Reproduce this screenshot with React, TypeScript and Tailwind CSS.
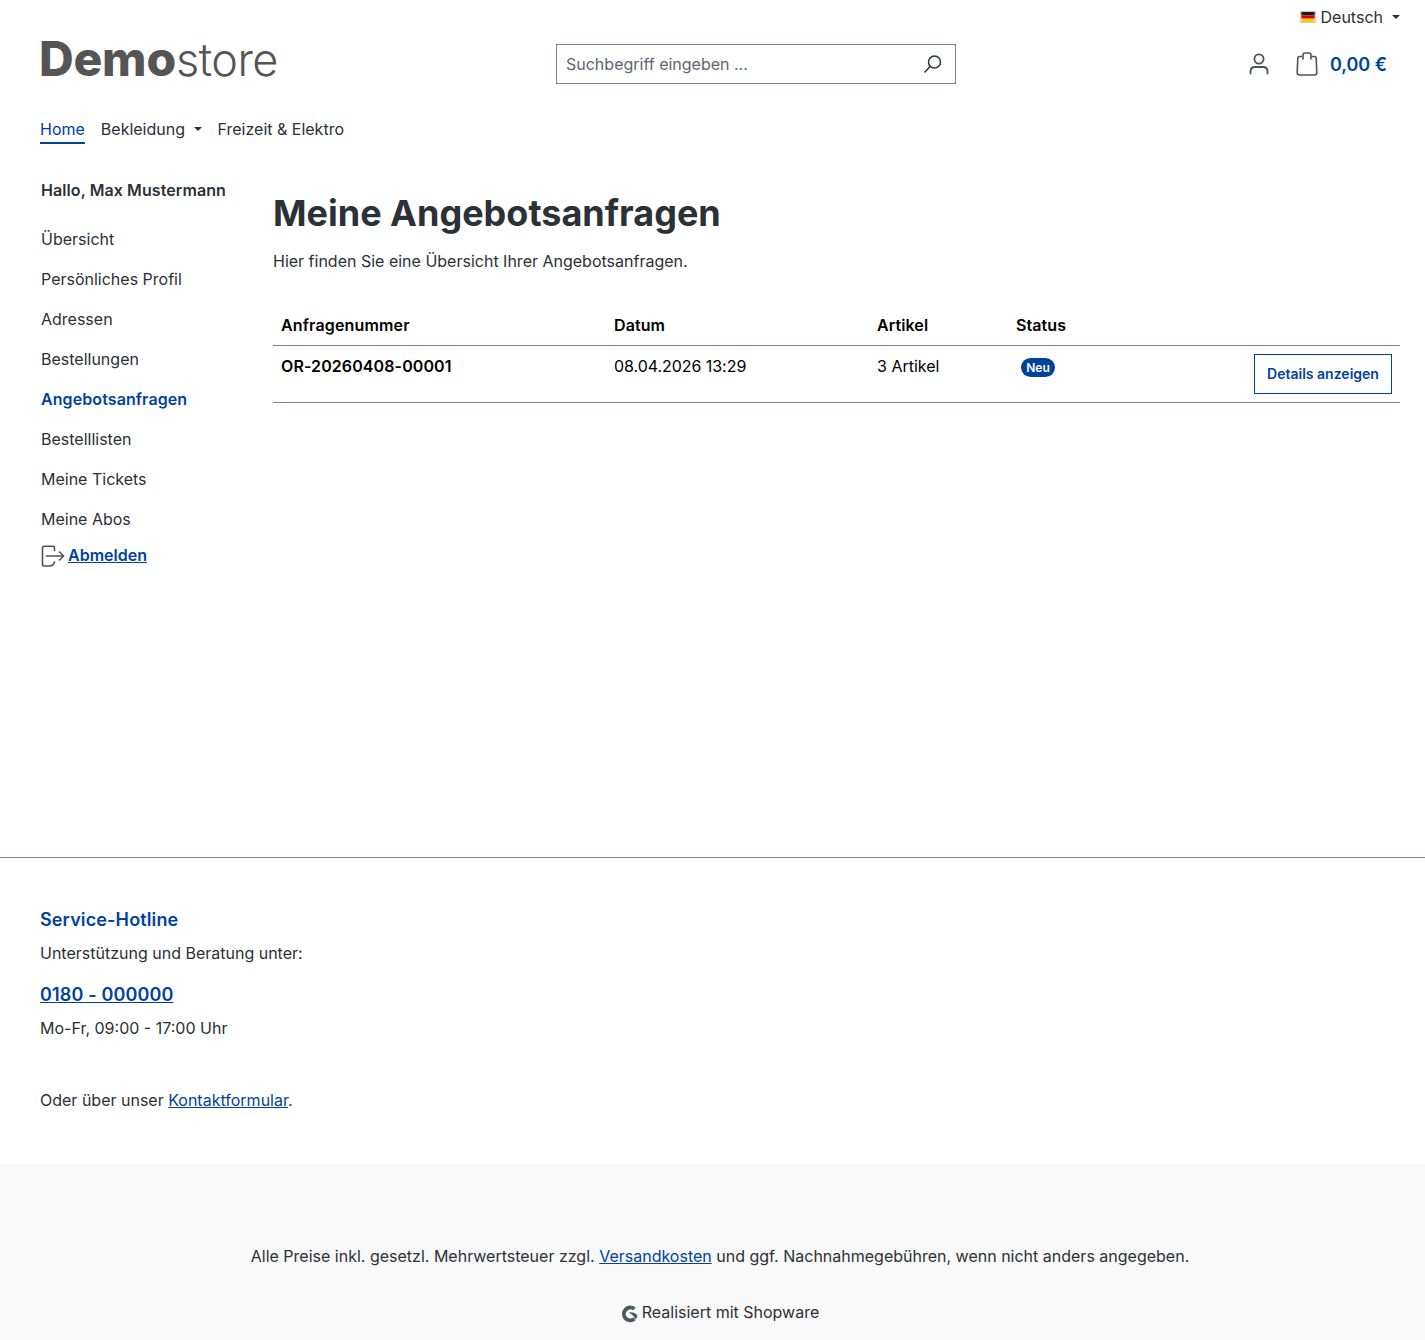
const sidebarLinks = [
  'Übersicht',
  'Persönliches Profil',
  'Adressen',
  'Bestellungen',
  'Angebotsanfragen',
  'Bestelllisten',
  'Meine Tickets',
  'Meine Abos',
];

function Caret() {
  return <span className="inline-block h-0 w-0 border-x-[4.8px] border-t-[4.8px] border-x-transparent border-t-[#2b3136]" />;
}

function GermanFlag() {
  return (
    <svg width="16" height="12" viewBox="0 0 16 12" className="border border-[#c8ccd0]">
      <rect width="16" height="4" fill="#1a1a1a" />
      <rect y="4" width="16" height="4" fill="#d80000" />
      <rect y="8" width="16" height="4" fill="#ffce00" />
    </svg>
  );
}

function SearchIcon() {
  return (
    <svg width="20" height="20" viewBox="0 0 20 20" fill="none" stroke="#2b3136" strokeWidth="1.5" strokeLinecap="round">
      <circle cx="11.5" cy="8" r="6" />
      <path d="M7.2 12.3 L2 18" />
    </svg>
  );
}

function UserIcon() {
  return (
    <svg width="20" height="22" viewBox="0 0 20 22" fill="none" stroke="#4a545b" strokeWidth="1.8" strokeLinecap="round">
      <circle cx="10" cy="6" r="4.6" />
      <path d="M1.5 20.5 V18.5 C1.5 15.6 3.6 14 6 14 H14 C16.4 14 18.5 15.6 18.5 18.5 V20.5" />
    </svg>
  );
}

function BagIcon() {
  return (
    <svg width="22" height="24" viewBox="0 0 22 24" fill="none" stroke="#4a545b" strokeWidth="1.6" strokeLinecap="round" strokeLinejoin="round">
      <path d="M5.5 4.5 H3.5 C2.4 4.5 1.8 5.2 1.8 6.2 L1.2 20.5 C1.2 22 2.2 23 3.7 23 H18.3 C19.8 23 20.8 22 20.8 20.5 L20.2 6.2 C20.2 5.2 19.6 4.5 18.5 4.5 H16.5" />
      <path d="M7 7 V2.8 C7 1.7 7.7 1 8.8 1 H13.2 C14.3 1 15 1.7 15 2.8 V7" />
    </svg>
  );
}

function LogoutIcon() {
  return (
    <svg width="24" height="22" viewBox="0 0 24 22" fill="none" stroke="#4a545b" strokeWidth="1.6" strokeLinecap="round" strokeLinejoin="round" className="mt-[2px]">
      <path d="M13.5 5.5 V2.8 C13.5 1.8 12.9 1.2 12 1.2 H3.2 C2.2 1.2 1.5 1.9 1.5 2.9 V19.3 C1.5 20.3 2.2 21 3.2 21 H8.5 C10.8 21 12.8 19.5 13.5 17" />
      <path d="M5.5 11 H22.5" />
      <path d="M18.5 7 L22.5 11 L18.5 15" />
    </svg>
  );
}

function ShopwareIcon() {
  return (
    <svg width="18" height="18" viewBox="0 0 18 18">
      <path d="M13.4 4 A6.4 6.4 0 1 0 13.4 13.8" fill="none" stroke="#4a5a63" strokeWidth="4" />
      <path d="M8 7.4 C11.4 7 15 8 16.6 11 L14.6 14.4 C13.4 11.4 11 9.2 8 7.4 Z" fill="#4a5a63" />
    </svg>
  );
}

export default function App() {
  return (
    <div className="flex min-h-[1340px] flex-col bg-white font-['Inter',sans-serif] text-base leading-6 text-[#2b3136]">
      {/* top bar */}
      <div className="flex h-[34px] items-center justify-end gap-[5px] pr-[25px]">
        <GermanFlag />
        <span>Deutsch</span>
        <span className="ml-[4px] flex">
          <Caret />
        </span>
      </div>

      {/* header */}
      <header className="relative flex h-[60px] items-center justify-between pl-[39px] pr-[38px]">
        <div className="-mt-[10px] w-[517px] text-[45px] leading-[52px] text-[#555555]">
          <span className="text-[48px] font-extrabold tracking-[-0.2px]">Demo</span>
          <span className="font-light tracking-[-0.5px]">store</span>
        </div>
        <div className="flex h-10 w-[400px] items-center justify-between border border-[#798490] pl-[9px] pr-[12px]">
          <span className="text-[#5c6670]">Suchbegriff eingeben ...</span>
          <SearchIcon />
        </div>
        <div className="ml-auto flex items-center">
          <UserIcon />
          <span className="ml-[27px]">
            <BagIcon />
          </span>
          <span className="ml-[12px] mt-[1px] text-lg font-semibold text-[#0042a0]">0,00 €</span>
        </div>
      </header>

      {/* nav */}
      <nav className="mt-[23px] flex items-start gap-4 pl-[40px]">
        <span className="border-b-2 border-[#0042a0] pb-[1px] text-[#0042a0]">Home</span>
        <span className="flex items-center gap-[8.5px]">
          Bekleidung
          <Caret />
        </span>
        <span>Freizeit &amp; Elektro</span>
      </nav>

      {/* content */}
      <div className="flex flex-1 pl-[41px] pr-[25px]">
        <aside className="mt-[34px] w-[232px] shrink-0">
          <div className="font-semibold tracking-[0.09px]">Hallo, Max Mustermann</div>
          <ul className="mt-[17px]">
            {sidebarLinks.map((link) => (
              <li
                key={link}
                className={`flex h-10 items-center ${link === 'Angebotsanfragen' ? 'font-semibold tracking-[0.09px] text-[#0042a0]' : ''}`}
              >
                {link}
              </li>
            ))}
          </ul>
          <div className="mt-[4px] flex items-center gap-[3px]">
            <LogoutIcon />
            <a href="#" className="font-semibold text-[#0042a0] underline">
              Abmelden
            </a>
          </div>
        </aside>

        <main className="mt-[44px] flex-1">
          <h1 className="text-[36px] leading-[50px] font-bold">Meine Angebotsanfragen</h1>
          <p className="mt-[11px]">Hier finden Sie eine Übersicht Ihrer Angebotsanfragen.</p>

          <table className="mt-[32px] w-full border-collapse text-black">
            <thead>
              <tr className="border-b border-[#798490]">
                <th className="w-[333px] px-2 pt-[8px] pb-[8px] text-left font-semibold tracking-[0.15px]">Anfragenummer</th>
                <th className="w-[263px] px-2 pb-[8px] pt-[8px] text-left font-semibold tracking-[0.1px]">Datum</th>
                <th className="w-[139px] px-2 pb-[8px] pt-[8px] text-left font-semibold tracking-[0.1px]">Artikel</th>
                <th className="px-2 pb-[8px] pt-[8px] text-left font-semibold tracking-[0.1px]">Status</th>
                <th />
              </tr>
            </thead>
            <tbody>
              <tr className="border-b border-[#798490]">
                <td className="px-2 pt-[8px] pb-[24px] align-top font-semibold tracking-[0.1px]">OR-20260408-00001</td>
                <td className="px-2 pt-[8px] pb-[24px] align-top tracking-[-0.05px]">08.04.2026 13:29</td>
                <td className="px-2 pt-[8px] pb-[24px] align-top">3 Artikel</td>
                <td className="px-2 pt-[8px] align-top">
                  <span className="ml-[5px] mt-[4px] flex h-[19px] w-[34px] items-center justify-center rounded-full bg-[#0042a0] text-[12px] leading-none font-semibold text-white">
                    Neu
                  </span>
                </td>
                <td className="px-2 py-[8px] text-right align-top">
                  <button className="h-10 w-[138px] border border-[#0042a0] text-[14px] font-semibold text-[#0042a0]">
                    Details anzeigen
                  </button>
                </td>
              </tr>
            </tbody>
          </table>
        </main>
      </div>

      {/* service footer */}
      <footer className="h-[307px] border-t border-[#798490] pl-[40px] pt-[48px]">
        <div className="text-lg leading-[27px] font-semibold tracking-[0.13px] text-[#0042a0]">Service-Hotline</div>
        <p className="mt-[8px]">Unterstützung und Beratung unter:</p>
        <a href="#" className="mt-[16px] block text-lg leading-[27px] font-semibold tracking-[0.15px] text-[#0042a0] underline">
          0180 - 000000
        </a>
        <p className="mt-[8px]">Mo-Fr, 09:00 - 17:00 Uhr</p>
        <p className="mt-[48px]">
          Oder über unser{' '}
          <a href="#" className="text-[#0042a0] underline">
            Kontaktformular
          </a>
          .
        </p>
      </footer>

      {/* bottom footer */}
      <div className="flex h-[176px] flex-col items-center bg-[#f9f9f9] pl-[15px] pt-[80px]">
        <p>
          Alle Preise inkl. gesetzl. Mehrwertsteuer zzgl.{' '}
          <a href="#" className="text-[#0042a0] underline">
            Versandkosten
          </a>{' '}
          und ggf. Nachnahmegebühren, wenn nicht anders angegeben.
        </p>
        <div className="mt-[32px] flex items-center gap-[3px]">
          <span className="mt-[3px]">
            <ShopwareIcon />
          </span>
          <span>Realisiert mit Shopware</span>
        </div>
      </div>
    </div>
  );
}
